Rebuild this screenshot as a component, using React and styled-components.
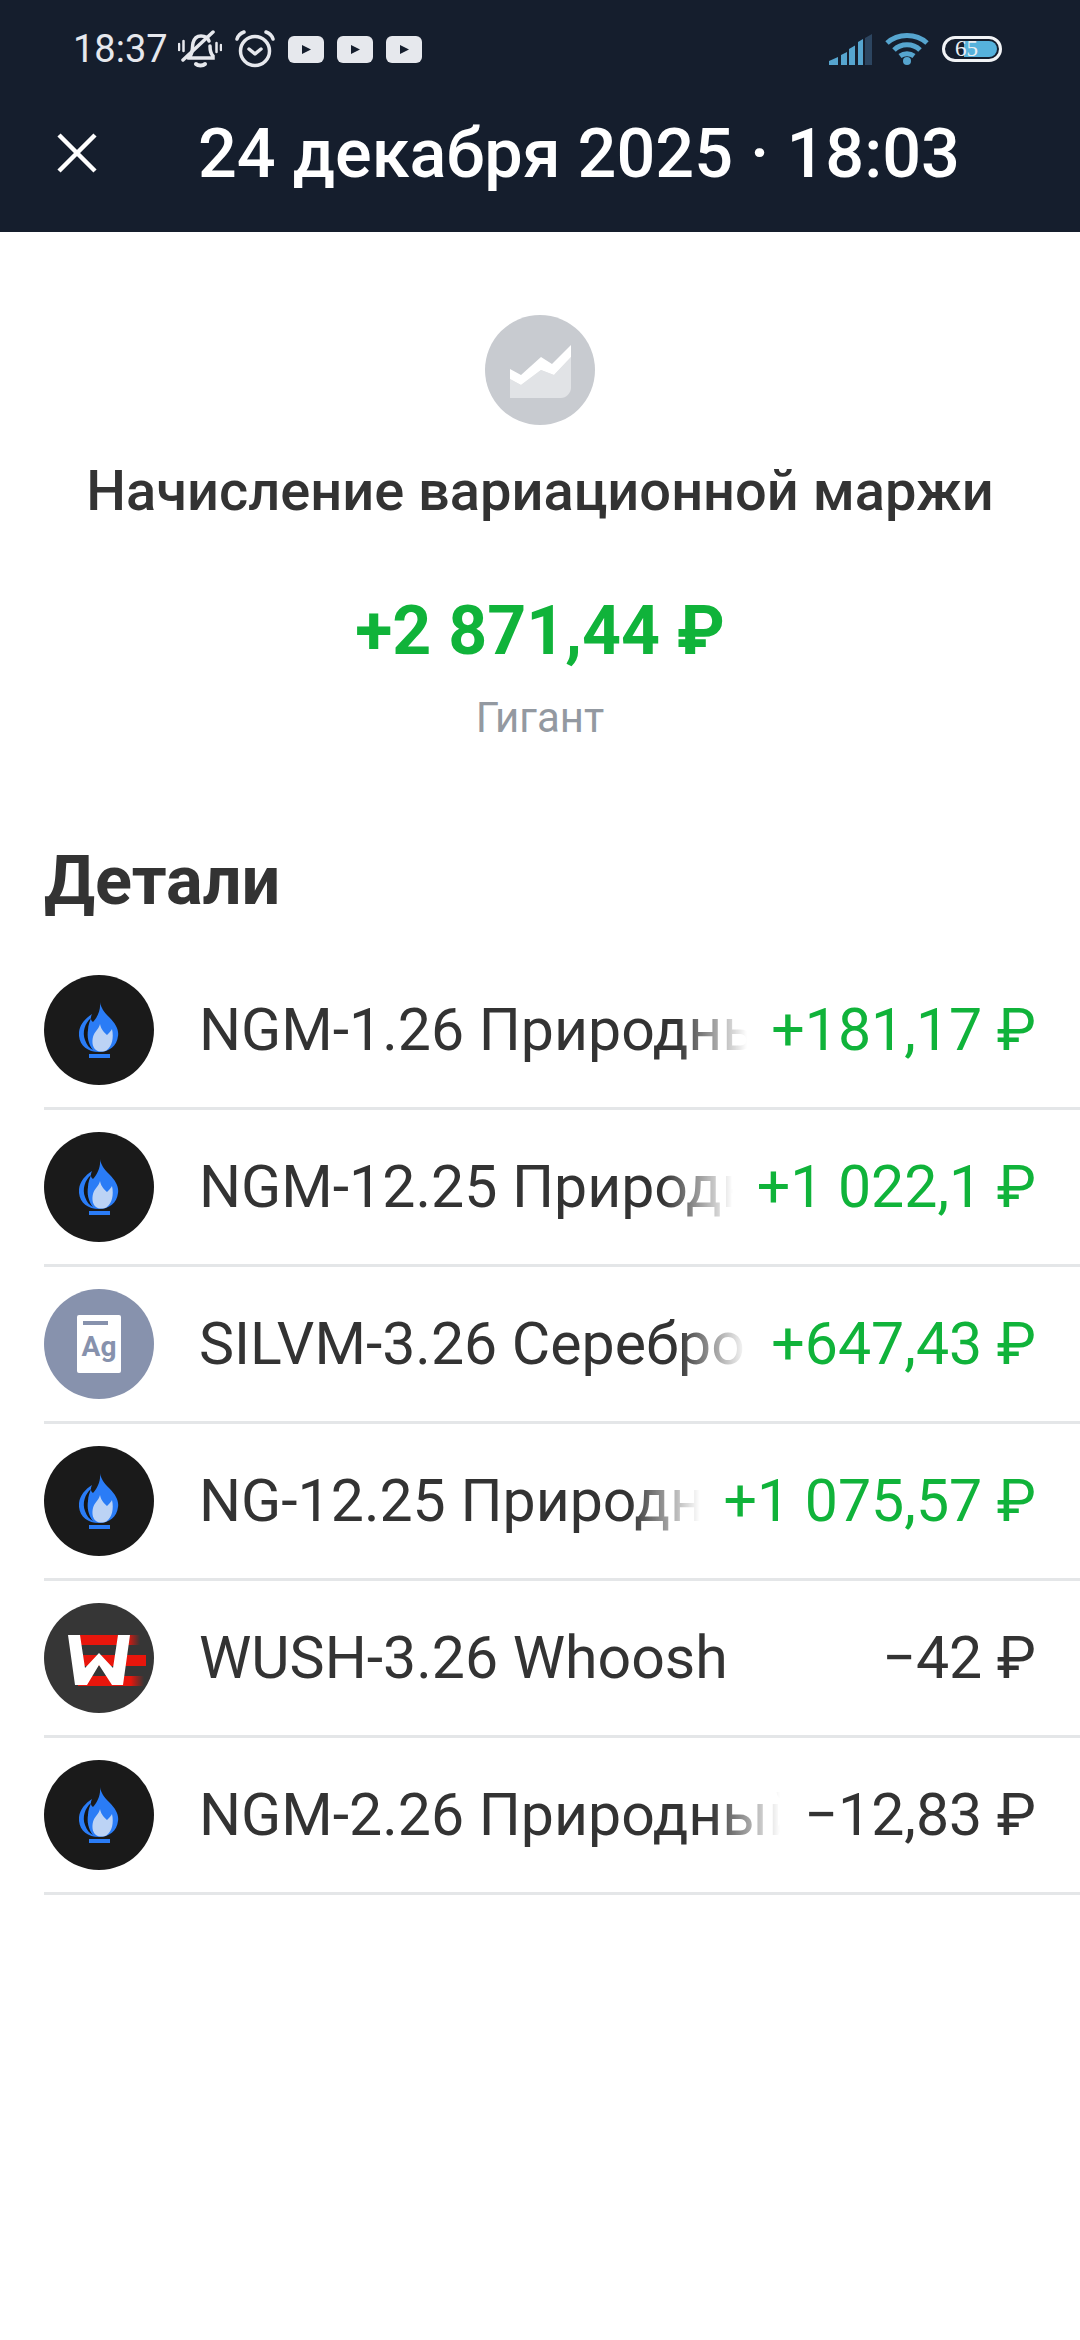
import React from "react";
import styled, { createGlobalStyle } from "styled-components";

const GlobalStyle = createGlobalStyle`
  html, body { margin: 0; padding: 0; background: #fff; }
  body { font-family: Roboto, "Noto Sans", sans-serif; }
`;

const rows = [
  { id: 1, logo: "gas", name: "NGM-1.26 Природный газ", amount: "+181,17 ₽", plus: true },
  { id: 2, logo: "gas", name: "NGM-12.25 Природный газ", amount: "+1 022,1 ₽", plus: true },
  { id: 3, logo: "silver", name: "SILVM-3.26 Серебро", amount: "+647,43 ₽", plus: true },
  { id: 4, logo: "gas", name: "NG-12.25 Природный газ", amount: "+1 075,57 ₽", plus: true },
  { id: 5, logo: "wush", name: "WUSH-3.26 Whoosh", amount: "−42 ₽", plus: false },
  { id: 6, logo: "gas", name: "NGM-2.26 Природный газ", amount: "−12,83 ₽", plus: false },
];

const Page = styled.div`
  width: 1080px;
  height: 2340px;
  background: #fff;
  overflow: hidden;
`;

const Header = styled.header`
  height: 232px;
  background: #151e2d;
  color: #fff;
`;

const StatusBar = styled.div`
  height: 98px;
  display: flex;
  align-items: center;
  justify-content: space-between;
  padding: 0 78px 0 73px;
  color: #e6e8ed;
`;

const StatusGroup = styled.div`
  display: flex;
  align-items: center;
  gap: ${(p) => p.$gap}px;
`;

const Clock = styled.span`
  font-size: 38px;
  line-height: 44px;
  margin-right: -3px;
`;

const Battery = styled.div`
  width: 60px;
  height: 26px;
  box-sizing: border-box;
  border: 3px solid #f2f4f6;
  border-radius: 13px;
  padding: 2px;
  position: relative;
  display: flex;
`;

const BatteryFill = styled.div`
  flex: 1;
  border-radius: 8px;
  background: linear-gradient(90deg, transparent 35%, #56b2dc 35%);
`;

const BatteryLabel = styled.span`
  position: absolute;
  left: 10px;
  top: -5px;
  font-family: "Liberation Serif", serif;
  font-size: 23px;
  line-height: 30px;
  color: #e9eef2;
`;

const Toolbar = styled.div`
  height: 134px;
  display: flex;
  align-items: flex-start;
`;

const CloseBtn = styled.button`
  width: 198px;
  height: 110px;
  padding: 0 0 0 57px;
  border: 0;
  background: none;
  display: flex;
  align-items: center;
  flex: none;
`;

const Title = styled.h1`
  margin: 0;
  font-size: 68.4px;
  line-height: 112px;
  font-weight: 500;
  white-space: nowrap;
`;

const Summary = styled.section`
  display: flex;
  flex-direction: column;
  align-items: center;
  padding-top: 83px;
`;

const ChartBadge = styled.div`
  width: 110px;
  height: 110px;
  border-radius: 50%;
  background: #c8cbd0;
  display: flex;
  align-items: center;
  justify-content: center;
`;

const OpName = styled.div`
  margin-top: 31px;
  font-size: 56px;
  line-height: 70px;
  font-weight: 500;
  color: #333;
  white-space: nowrap;
`;

const Total = styled.div`
  margin-top: 65px;
  font-size: 68px;
  line-height: 80px;
  font-weight: 700;
  color: #10b33a;
  white-space: nowrap;
`;

const Account = styled.div`
  margin-top: 23px;
  font-size: 42px;
  line-height: 48px;
  color: #9399a1;
`;

const Heading = styled.h2`
  margin: 99px 0 0;
  padding-left: 44px;
  font-size: 68.5px;
  line-height: 80px;
  font-weight: 700;
  color: #333;
`;

const List = styled.div`
  margin-top: 32px;
  padding-left: 44px;
`;

const Row = styled.div`
  height: 157px;
  box-sizing: border-box;
  border-bottom: 3px solid #e4e6e8;
  padding: 0 44px 0 0;
  display: flex;
  align-items: center;
`;

const Avatar = styled.div`
  width: 110px;
  height: 110px;
  border-radius: 50%;
  flex: none;
  margin-right: 45px;
  background: ${(p) => p.$bg};
  display: flex;
  align-items: center;
  justify-content: center;
  overflow: hidden;
`;

const Name = styled.div`
  flex: 1;
  min-width: 0;
  overflow: hidden;
  white-space: nowrap;
  font-size: 59px;
  line-height: 70px;
  color: #333;
  -webkit-mask-image: linear-gradient(90deg, #000 calc(100% - 70px), transparent 100%);
  mask-image: linear-gradient(90deg, #000 calc(100% - 70px), transparent 100%);
`;

const Amount = styled.div`
  flex: none;
  margin-left: 24px;
  white-space: nowrap;
  font-size: 59px;
  line-height: 70px;
  color: ${(p) => (p.$plus ? "#10b33a" : "#333")};
`;

const Plate = styled.div`
  position: relative;
  width: 44px;
  height: 58px;
  border-radius: 2px;
  background: #fff;
  &::before {
    content: "";
    position: absolute;
    left: 6px;
    top: 6px;
    width: 25px;
    height: 4px;
    background: #8792ad;
  }
`;

const PlateLabel = styled.span`
  position: absolute;
  left: 0;
  right: 0;
  top: 17px;
  text-align: center;
  font-size: 28px;
  line-height: 30px;
  font-weight: 700;
  color: #8792ad;
`;

const CloseIcon = () => (
  <svg width="40" height="40" viewBox="0 0 40 40">
    <path d="M2 2l36 36M38 2L2 38" stroke="#fff" strokeWidth="4.5" fill="none" />
  </svg>
);

const MutedBell = () => (
  <svg width="44" height="38" viewBox="0 0 44 38" fill="none" stroke="#e6e8ed" strokeLinecap="round">
    <path d="M12 26c3-3 2-8 3-13 1-4 4-7 8-7s7 2 8 5M32 16c0 4 1 8 3 10v2H10" strokeWidth="3.5" />
    <path d="M18 34c2 2 7 2 9 0" strokeWidth="4" />
    <path d="M5 30L35 2" strokeWidth="3.5" />
    <path d="M1 14v6M5.5 11v10M38.5 13v9M43 15v5" strokeWidth="2.5" />
  </svg>
);

const AlarmIcon = () => (
  <svg width="40" height="38" viewBox="0 0 40 38" fill="none" stroke="#e6e8ed" strokeLinecap="round" strokeLinejoin="round">
    <circle cx="20" cy="21" r="14.5" strokeWidth="3.5" />
    <path d="M14 19l6 5 6-5" strokeWidth="3.5" />
    <path d="M2 9c1-3 4-6 7-7M38 9c-1-3-4-6-7-7" strokeWidth="3.5" />
  </svg>
);

const PlayPill = () => (
  <svg width="36" height="27" viewBox="0 0 36 27">
    <rect width="36" height="27" rx="6" fill="#e6e8ed" />
    <path d="M14 9l9 4.5-9 4.500z" fill="#151e2d" />
  </svg>
);

const SignalIcon = () => (
  <svg width="43" height="31" viewBox="0 0 43 31">
    <path d="M0 31v-4l9-4v8z" fill="#56a5cf" />
    <path d="M12 31V21l6-3v13z" fill="#56a5cf" />
    <path d="M20 31V15l6-3.5V31z" fill="#56a5cf" />
    <path d="M29 31V8l5-3v26z" fill="#56a5cf" />
    <path d="M36 31V4l7-4v31z" fill="#2c4560" />
  </svg>
);

const WifiIcon = () => (
  <svg width="44" height="32" viewBox="0 0 44 32" fill="none" stroke="#56a5cf" strokeWidth="5">
    <path d="M2 10c11-10 29-10 40 0" />
    <path d="M9 17c7-7 19-7 26 0" />
    <path d="M15 23c4-3 10-3 14 0" />
    <circle cx="22" cy="28" r="4" fill="#56a5cf" stroke="none" />
  </svg>
);

const ChartIcon = () => (
  <svg width="61" height="53" viewBox="0 0 61 53" style={{ marginTop: 2 }}>
    <path d="M0 34l11 6 20-15 13 5 17-18v31c0 5-5 10-10 10H0z" fill="#e1e3e6" />
    <path d="M0 24l11 6 20-18 11 7L61 0v12L44 30l-13-5-20 15-11-6z" fill="#fff" />
  </svg>
);

const GasIcon = () => (
  <svg width="40" height="56" viewBox="0 0 40 56">
    <path d="M21 0c1 6 4 10 9 15 7 7 10 13 9 19-1 10-9 16-19 16C9 50 1 44 0 34c-1-9 5-17 13-22-2 4-1 7 1 8 4-4 8-12 7-20z" fill="#2a7cf6" />
    <path d="M12 16C6 21 3 30 6 38c2 5 4 8 8 10-5-6-6-14-5-20 0-5 2-9 3-12z" fill="#151515" />
    <path d="M21 22c1 6 5 9 7 11 2-2 4-4 5-6 2 9 0 17-5 21-3 2-8 2-11 0-4-3-4-9-3-13 1-5 6-8 7-13z" fill="#bcd3f5" />
    <rect x="10" y="52" width="21" height="4" fill="#2a7cf6" />
  </svg>
);

const WushIcon = () => (
  <svg width="110" height="110" viewBox="0 0 110 110">
    <defs>
      <linearGradient id="fade" x1="0" x2="1" y1="0" y2="0">
        <stop offset="0.8" stopColor="#e8160c" />
        <stop offset="1" stopColor="#e8160c" stopOpacity="0" />
      </linearGradient>
    </defs>
    <rect x="34" y="32" width="62" height="10" fill="url(#fade)" />
    <rect x="34" y="52" width="68" height="11" fill="#e8160c" />
    <rect x="34" y="73" width="66" height="10" fill="url(#fade)" />
    <path d="M24 32h12l5 33 14-15 14 15 5-33h12l-7 50H68L55 62 43 82H31z" fill="#fff" />
  </svg>
);

const Logo = ({ kind }) => {
  if (kind === "gas") {
    return (
      <Avatar $bg="#1a1a1a">
        <GasIcon />
      </Avatar>
    );
  }
  if (kind === "silver") {
    return (
      <Avatar $bg="#8792ad">
        <Plate>
          <PlateLabel>Ag</PlateLabel>
        </Plate>
      </Avatar>
    );
  }
  return (
    <Avatar $bg="#363636">
      <WushIcon />
    </Avatar>
  );
};

export default function App() {
  return (
    <Page>
      <GlobalStyle />
      <Header>
        <StatusBar>
          <StatusGroup $gap={13}>
            <Clock>18:37</Clock>
            <MutedBell />
            <AlarmIcon />
            <PlayPill />
            <PlayPill />
            <PlayPill />
          </StatusGroup>
          <StatusGroup $gap={13}>
            <SignalIcon />
            <WifiIcon />
            <Battery>
              <BatteryFill />
              <BatteryLabel>65</BatteryLabel>
            </Battery>
          </StatusGroup>
        </StatusBar>
        <Toolbar>
          <CloseBtn aria-label="Закрыть">
            <CloseIcon />
          </CloseBtn>
          <Title>24 декабря 2025 · 18:03</Title>
        </Toolbar>
      </Header>
      <Summary>
        <ChartBadge>
          <ChartIcon />
        </ChartBadge>
        <OpName>Начисление вариационной маржи</OpName>
        <Total>+2 871,44 ₽</Total>
        <Account>Гигант</Account>
      </Summary>
      <Heading>Детали</Heading>
      <List>
        {rows.map((row) => (
          <Row key={row.id}>
            <Logo kind={row.logo} />
            <Name>{row.name}</Name>
            <Amount $plus={row.plus}>{row.amount}</Amount>
          </Row>
        ))}
      </List>
    </Page>
  );
}
